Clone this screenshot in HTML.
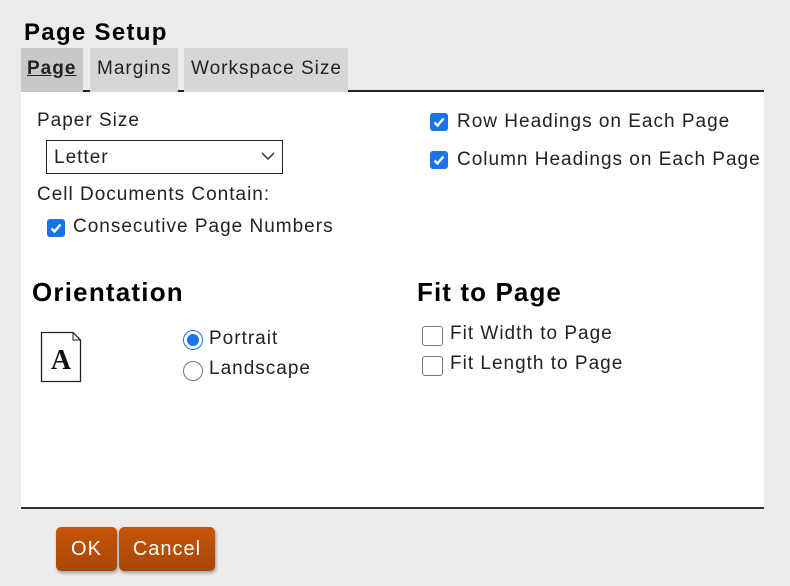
<!DOCTYPE html>
<html><head><style>
body{margin:0;width:790px;height:586px;background:#ececec;font-family:"Liberation Sans",sans-serif;position:relative;overflow:hidden;color:#222}
.a{position:absolute;white-space:nowrap}
.t{font-size:19px;letter-spacing:1px}
.cb{position:absolute;width:18px;height:18px;border-radius:3px;background:#1a73e8}
.cb svg{position:absolute;left:2px;top:2px}
.ucb{position:absolute;width:17px;height:17px;border:1px solid #777;border-radius:3px;background:#fff;box-sizing:border-box}
.btn{position:absolute;top:527px;height:44px;background:linear-gradient(#c65508,#a94606);border-radius:5px;color:#fff;font-size:20px;text-align:center;line-height:44px;box-shadow:1px 2px 3px rgba(0,0,0,.35)}
</style></head><body>
<div class="a" style="left:24px;top:19px;font-size:24px;font-weight:bold;color:#000;letter-spacing:1.3px">Page Setup</div>
<div class="a" style="left:21px;top:48px;width:62px;height:44px;background:#c8c8c8"></div>
<div class="a" style="left:27px;top:58px;font-size:19px;font-weight:bold;text-decoration:underline;color:#222;letter-spacing:1px">Page</div>
<div class="a" style="left:90px;top:48px;width:88px;height:44px;background:#d6d6d6"></div>
<div class="a t" style="left:97px;top:58px">Margins</div>
<div class="a" style="left:184px;top:48px;width:164px;height:44px;background:#d6d6d6"></div>
<div class="a t" style="left:191px;top:58px">Workspace Size</div>
<div class="a" style="left:21px;top:92px;width:743px;height:416px;background:#fff"></div>
<div class="a" style="left:83px;top:90px;width:7px;height:2px;background:#222"></div>
<div class="a" style="left:178px;top:90px;width:6px;height:2px;background:#222"></div>
<div class="a" style="left:348px;top:90px;width:416px;height:2px;background:#222"></div>
<div class="a" style="left:21px;top:507px;width:743px;height:2px;background:#333"></div>
<div class="a t" style="left:37px;top:110px">Paper Size</div>
<div class="a" style="left:46px;top:140px;width:237px;height:34px;border:1px solid #222;box-sizing:border-box;background:#fff"></div>
<div class="a t" style="left:54px;top:147px">Letter</div>
<svg class="a" style="left:261px;top:152px" width="14" height="9"><path d="M1 1L7 7L13 1" fill="none" stroke="#333" stroke-width="1.5"/></svg>
<div class="a t" style="left:37px;top:184px">Cell Documents Contain:</div>
<div class="cb" style="left:47px;top:219px"><svg width="14" height="14"><path d="M2.5 7.5L5.5 10.5L11.5 3.5" fill="none" stroke="#fff" stroke-width="2.4"/></svg></div>
<div class="a t" style="left:73px;top:216px">Consecutive Page Numbers</div>
<div class="cb" style="left:430px;top:113px"><svg width="14" height="14"><path d="M2.5 7.5L5.5 10.5L11.5 3.5" fill="none" stroke="#fff" stroke-width="2.4"/></svg></div>
<div class="a t" style="left:457px;top:111px">Row Headings on Each Page</div>
<div class="cb" style="left:430px;top:151px"><svg width="14" height="14"><path d="M2.5 7.5L5.5 10.5L11.5 3.5" fill="none" stroke="#fff" stroke-width="2.4"/></svg></div>
<div class="a t" style="left:457px;top:149px">Column Headings on Each Page</div>
<div class="a" style="left:32px;top:277px;font-size:26px;font-weight:bold;color:#000;letter-spacing:1.2px">Orientation</div>
<div class="a" style="left:417px;top:277px;font-size:26px;font-weight:bold;color:#000;letter-spacing:1.1px">Fit to Page</div>
<svg class="a" style="left:40px;top:331px" width="42" height="52"><path d="M1.5 1.5H33L40.5 9V50.5H1.5Z" fill="#fff" stroke="#222" stroke-width="1.3"/><path d="M33 1.5V9H40.5" fill="none" stroke="#222" stroke-width="1"/><text x="21" y="38" text-anchor="middle" font-family="Liberation Serif,serif" font-size="28" font-weight="bold" fill="#111">A</text></svg>
<div class="a" style="left:183px;top:330px;width:20px;height:20px;border-radius:50%;border:1px solid #1a73e8;box-sizing:border-box;background:#fff"><div style="position:absolute;left:3px;top:3px;width:12px;height:12px;border-radius:50%;background:#1a73e8"></div></div>
<div class="a t" style="left:209px;top:328px">Portrait</div>
<div class="a" style="left:183px;top:361px;width:20px;height:20px;border-radius:50%;border:1px solid #777;box-sizing:border-box;background:#fff"></div>
<div class="a t" style="left:209px;top:358px">Landscape</div>
<div class="ucb" style="left:422px;top:326px;width:21px;height:20px"></div>
<div class="a t" style="left:450px;top:323px">Fit Width to Page</div>
<div class="ucb" style="left:422px;top:356px;width:21px;height:20px"></div>
<div class="a t" style="left:450px;top:353px">Fit Length to Page</div>
<div class="btn" style="left:56px;width:61px;letter-spacing:1px">OK</div>
<div class="btn" style="left:119px;width:96px;letter-spacing:1px">Cancel</div>
</body></html>
